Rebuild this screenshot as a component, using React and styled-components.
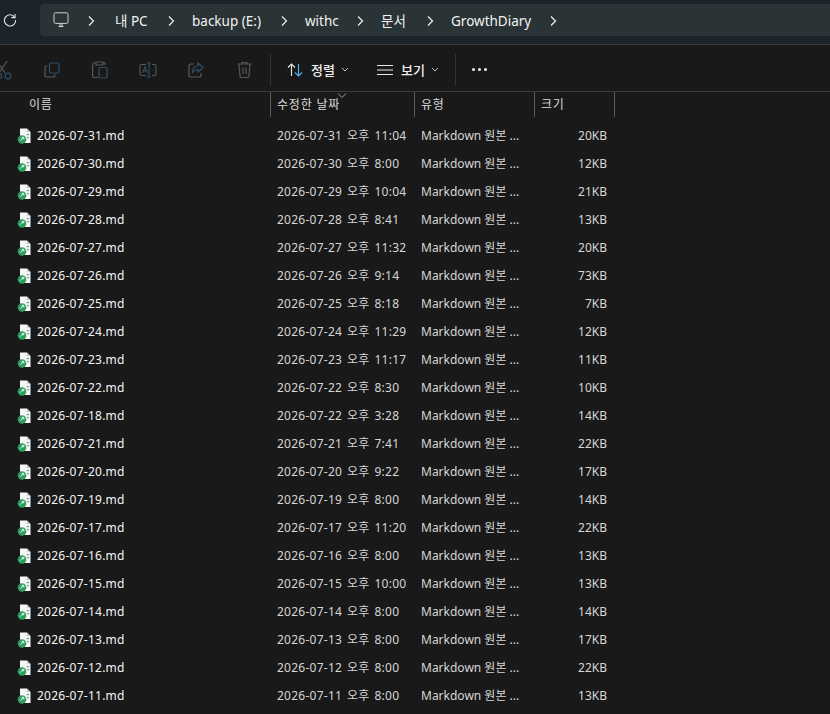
import React from "react";
import styled, { createGlobalStyle } from "styled-components";

const GlobalStyle = createGlobalStyle`
  html, body {
    margin: 0;
    padding: 0;
    background: #191919;
  }
  body {
    font-family: "Noto Sans", "Noto Sans CJK KR", sans-serif;
    overflow: hidden;
  }
`;

const Window = styled.div`
  width: 830px;
  height: 714px;
  overflow: hidden;
  background: #191919;
  color: #fff;
`;

const AddressBar = styled.div`
  height: 45px;
  box-sizing: border-box;
  padding-top: 4px;
  display: flex;
  align-items: flex-start;
  background: #1b2428;
  border-bottom: 1px solid #3a3a3a;
`;

const Reload = styled.div`
  width: 40px;
  height: 32px;
  padding-left: 3px;
  box-sizing: border-box;
  display: flex;
  align-items: center;
`;

const Crumbs = styled.div`
  flex: 1;
  height: 32px;
  display: flex;
  align-items: center;
  padding-left: 13px;
  background: #2a3336;
  border-radius: 4px 0 0 4px;
`;

const Crumb = styled.span`
  font-size: 13.5px;
  line-height: 20px;
  color: #f2f2f2;
  white-space: nowrap;
  width: ${(p) => p.$w}px;
  margin-top: 2px;
`;

const Chevron = styled.svg`
  width: 8px;
  height: 12px;
  margin: 2px ${(p) => p.$right}px 0 ${(p) => p.$left}px;
  flex: none;
`;

const MonitorIcon = styled.svg`
  width: 16px;
  height: 16px;
  flex: none;
`;

const Toolbar = styled.div`
  height: 47px;
  box-sizing: border-box;
  padding-top: 3px;
  display: flex;
  align-items: center;
  border-bottom: 1px solid #3a3a3a;
  background: #191919;
`;

const IconSlot = styled.div`
  width: 48px;
  flex: none;
  display: flex;
  justify-content: center;
  align-items: center;
  &:first-child {
    margin-left: -20px;
  }
`;

const ToolSep = styled.div`
  width: 1px;
  height: 32px;
  background: #333;
  margin-left: ${(p) => p.$left}px;
`;

const ToolButton = styled.div`
  display: flex;
  align-items: center;
  margin-left: ${(p) => p.$left}px;
  font-size: 13px;
  font-weight: 500;
  color: #f0f0f0;
`;

const ToolLabel = styled.span`
  margin: 0 6px 0 ${(p) => p.$gap}px;
  line-height: 16px;
`;

const Dots = styled.div`
  margin-left: 16px;
  display: flex;
  gap: 3px;
`;

const Dot = styled.i`
  display: block;
  width: 3px;
  height: 3px;
  border-radius: 50%;
  background: #f0f0f0;
`;

const Grid = styled.div`
  display: grid;
  grid-template-columns: 270px 145px 120px 80px;
  width: 615px;
`;

const HeaderRow = styled(Grid)`
  height: 25px;
`;

const HeaderCell = styled.div`
  position: relative;
  box-sizing: border-box;
  height: 25px;
  padding-left: ${(p) => p.$pad}px;
  padding-top: 4px;
  font-size: 12px;
  line-height: 18px;
  letter-spacing: 0.8px;
  color: #dcdcdc;
  border-right: 1px solid #5a5a5a;
  &:nth-child(2) {
    border-left: 1px solid #5a5a5a;
  }
`;

const NameHeader = styled(HeaderCell)`
  border-right: none;
`;

const SortCaret = styled.svg`
  position: absolute;
  left: 66px;
  top: 1px;
  width: 10px;
  height: 5px;
`;

const Rows = styled.div`
  padding-top: 5px;
`;

const Row = styled(Grid)`
  height: 28px;
  align-items: center;
  font-size: 12px;
  line-height: 16px;
  color: #d6d6d6;
`;

const NameCell = styled.div`
  display: flex;
  align-items: center;
  padding-left: 17px;
  color: #f4f4f4;
  white-space: nowrap;
  letter-spacing: 0.25px;
`;

const FileIcon = styled.svg`
  width: 14px;
  height: 16px;
  margin-right: 6px;
  flex: none;
`;

const DateCell = styled.div`
  padding-left: 7px;
  white-space: nowrap;
  letter-spacing: 0.25px;
  word-spacing: 1.5px;
`;

const TypeCell = styled.div`
  padding-left: 6px;
  white-space: nowrap;
`;

const SizeCell = styled.div`
  padding-right: 8px;
  text-align: right;
`;

const files = [
  ["2026-07-31.md", "2026-07-31 오후 11:04", "20KB"],
  ["2026-07-30.md", "2026-07-30 오후 8:00", "12KB"],
  ["2026-07-29.md", "2026-07-29 오후 10:04", "21KB"],
  ["2026-07-28.md", "2026-07-28 오후 8:41", "13KB"],
  ["2026-07-27.md", "2026-07-27 오후 11:32", "20KB"],
  ["2026-07-26.md", "2026-07-26 오후 9:14", "73KB"],
  ["2026-07-25.md", "2026-07-25 오후 8:18", "7KB"],
  ["2026-07-24.md", "2026-07-24 오후 11:29", "12KB"],
  ["2026-07-23.md", "2026-07-23 오후 11:17", "11KB"],
  ["2026-07-22.md", "2026-07-22 오후 8:30", "10KB"],
  ["2026-07-18.md", "2026-07-22 오후 3:28", "14KB"],
  ["2026-07-21.md", "2026-07-21 오후 7:41", "22KB"],
  ["2026-07-20.md", "2026-07-20 오후 9:22", "17KB"],
  ["2026-07-19.md", "2026-07-19 오후 8:00", "14KB"],
  ["2026-07-17.md", "2026-07-17 오후 11:20", "22KB"],
  ["2026-07-16.md", "2026-07-16 오후 8:00", "13KB"],
  ["2026-07-15.md", "2026-07-15 오후 10:00", "13KB"],
  ["2026-07-14.md", "2026-07-14 오후 8:00", "14KB"],
  ["2026-07-13.md", "2026-07-13 오후 8:00", "17KB"],
  ["2026-07-12.md", "2026-07-12 오후 8:00", "22KB"],
  ["2026-07-11.md", "2026-07-11 오후 8:00", "13KB"],
];

const crumbs = [
  ["내 PC", 35],
  ["backup (E:)", 71],
  ["withc", 34],
  ["문서", 28],
  ["GrowthDiary", 81],
];

const dimGrey = "#54595c";
const dimBlue = "#2f5068";

function Chev({ left, right }) {
  return (
    <Chevron $left={left} $right={right} viewBox="0 0 8 12">
      <path d="M2 1.5 6.5 6 2 10.5" fill="none" stroke="#f0f0f0" strokeWidth="1.2" />
    </Chevron>
  );
}

function MdFile() {
  return (
    <FileIcon viewBox="0 0 14 16">
      <path d="M3 0.5h7L13.500 4v11H3z" fill="#f4f6f6" />
      <path d="M10 0.5V4h3.500z" fill="#b9c6cc" />
      <rect x="9.500" y="6" width="2.500" height="1.200" fill="#7d9fb3" />
      <rect x="10" y="9" width="2" height="1.200" fill="#7d9fb3" />
      <circle cx="5" cy="11.500" r="4.300" fill="#2e9e5f" />
      <path d="M3.200 12.500 6.600 9.600M4.800 9.400h2v2" fill="none" stroke="#e6f5ec" strokeWidth="1" />
    </FileIcon>
  );
}

export default function App() {
  return (
    <Window>
      <GlobalStyle />
      <AddressBar>
        <Reload>
          <svg width="14" height="14" viewBox="0 0 14 14" fill="none" stroke="#e8e8e8" strokeWidth="1.1">
            <path d="M11.600 4.200A5.600 5.600 0 1 0 12.600 7" />
            <path d="M12 1v3.600H8.400" />
          </svg>
        </Reload>
        <Crumbs>
          <MonitorIcon viewBox="0 0 16 16" fill="none" stroke="#cfd2d3" strokeWidth="1">
            <rect x="1" y="0.800" width="14" height="10.600" rx="1.500" />
            <path d="M5.500 14.500h5M7 11.500v3M9 11.500v3" />
          </MonitorIcon>
          <Chev left={18} right={20} />
          {crumbs.map(([text, w], i) => (
            <React.Fragment key={text}>
              <Crumb $w={w}>{text}</Crumb>
              <Chev left={17} right={i === crumbs.length - 1 ? 0 : 17} />
            </React.Fragment>
          ))}
        </Crumbs>
      </AddressBar>

      <Toolbar>
        <IconSlot>
          <svg width="20" height="20" viewBox="0 0 20 20" fill="none" stroke={dimGrey} strokeWidth="1.200">
            <path d="M3 1l8 12M13 1 5 13" />
            <circle cx="5" cy="16" r="2.800" stroke={dimBlue} />
            <circle cx="14" cy="16" r="2.800" stroke={dimBlue} />
          </svg>
        </IconSlot>
        <IconSlot>
          <svg width="16" height="16" viewBox="0 0 16 16" fill="none" strokeWidth="1.200">
            <rect x="5.500" y="1" width="9.500" height="10" rx="1.500" stroke={dimBlue} />
            <path d="M3.500 4H3a2 2 0 0 0-2 2v7a2 2 0 0 0 2 2h6a2 2 0 0 0 2-2v-.5" stroke={dimGrey} />
          </svg>
        </IconSlot>
        <IconSlot>
          <svg width="16" height="18" viewBox="0 0 16 18" fill="none" strokeWidth="1.200">
            <path d="M4 2H2a1.400 1.400 0 0 0-1.400 1.400V15A1.500 1.500 0 0 0 2 16.500h4M4 1h7v3H4zM11 2h2v2" stroke={dimGrey} />
            <rect x="7" y="6.500" width="8" height="10.500" rx="1.500" stroke={dimBlue} />
          </svg>
        </IconSlot>
        <IconSlot>
          <svg width="18" height="16" viewBox="0 0 18 16" fill="none" strokeWidth="1.100">
            <path d="M7 2.500H2.500A1.500 1.500 0 0 0 1 4v8a1.500 1.500 0 0 0 1.500 1.500H7M13 2.500h2.500A1.500 1.500 0 0 1 17 4v8a1.500 1.500 0 0 1-1.500 1.500H13" stroke={dimGrey} />
            <path d="M8 1h4M8 15h4M10 1v14" stroke={dimBlue} />
            <path d="M3.500 11 6 5l2.500 6M4.300 9h3.400" stroke={dimBlue} />
          </svg>
        </IconSlot>
        <IconSlot>
          <svg width="16" height="16" viewBox="0 0 16 16" fill="none" strokeWidth="1.200">
            <path d="M6 2H3a2 2 0 0 0-2 2v9a2 2 0 0 0 2 2h8a2 2 0 0 0 2-2v-2" stroke={dimGrey} />
            <path d="M10 1l5 4.500-5 4.500V7.500C7 7.500 5.500 9 4.500 11 4.500 7 6.500 4 10 3.500z" stroke={dimBlue} />
          </svg>
        </IconSlot>
        <IconSlot>
          <svg width="15" height="17" viewBox="0 0 15 17" fill="none" stroke={dimGrey} strokeWidth="1.200">
            <path d="M0.500 3h14M5 3V1.500h5V3M2 3l1 12a1.500 1.500 0 0 0 1.500 1.500h6A1.500 1.500 0 0 0 12 15l1-12M6 6.500v6.500M9 6.500v6.500" />
          </svg>
        </IconSlot>
        <ToolSep $left={2} />
        <ToolButton $left={16}>
          <svg width="16" height="14" viewBox="0 0 16 14" fill="none" strokeWidth="1.100">
            <path d="M4.500 13V1M1 4.500 4.500 1 8 4.500" stroke="#e8e8e8" />
            <path d="M11.500 1v12M8 9.500l3.500 3.500 3.500-3.500" stroke="#4fb6ee" />
          </svg>
          <ToolLabel $gap={8}>정렬</ToolLabel>
          <svg width="8" height="5" viewBox="0 0 8 5" fill="none" stroke="#bbb" strokeWidth="1">
            <path d="M1 1l3 3 3-3" />
          </svg>
        </ToolButton>
        <ToolButton $left={28}>
          <svg width="16" height="12" viewBox="0 0 16 12" fill="none" stroke="#e8e8e8" strokeWidth="1">
            <path d="M0 1.500h16M0 6h16M0 10.500h16" />
          </svg>
          <ToolLabel $gap={8}>보기</ToolLabel>
          <svg width="8" height="5" viewBox="0 0 8 5" fill="none" stroke="#bbb" strokeWidth="1">
            <path d="M1 1l3 3 3-3" />
          </svg>
        </ToolButton>
        <ToolSep $left={16} />
        <Dots>
          <Dot />
          <Dot />
          <Dot />
        </Dots>
      </Toolbar>

      <HeaderRow>
        <NameHeader $pad={29}>이름</NameHeader>
        <HeaderCell $pad={6}>
          <SortCaret viewBox="0 0 10 5">
            <path d="M1 .5 5 4.500 9 .5" fill="none" stroke="#9a9a9a" strokeWidth="1" />
          </SortCaret>
          수정한 날짜
        </HeaderCell>
        <HeaderCell $pad={6}>유형</HeaderCell>
        <HeaderCell $pad={6}>크기</HeaderCell>
      </HeaderRow>

      <Rows>
        {files.map(([name, date, size]) => (
          <Row key={name}>
            <NameCell>
              <MdFile />
              {name}
            </NameCell>
            <DateCell>{date}</DateCell>
            <TypeCell>Markdown 원본 ...</TypeCell>
            <SizeCell>{size}</SizeCell>
          </Row>
        ))}
      </Rows>
    </Window>
  );
}
